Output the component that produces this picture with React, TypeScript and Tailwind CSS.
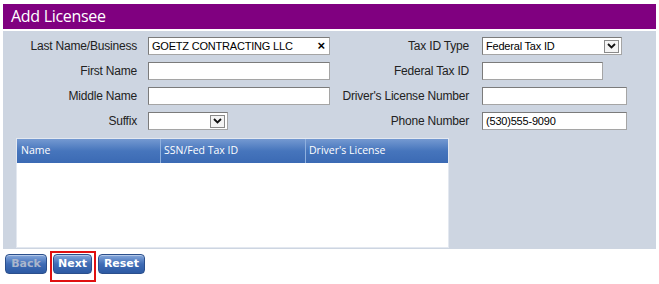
import { ReactNode } from "react";

const labelCls = "text-right text-[12px] leading-[18px] tracking-[-0.2px] text-[#222]";
const inputCls =
  "h-[18px] border border-[#a5a5a5] border-t-[#7b7b7b] border-l-[#7b7b7b] bg-white px-[3px] text-[11px] leading-[16px] tracking-[-0.2px] text-black";

const SelectBox = ({ width, value }: { width: number; value?: string }) => (
  <div
    className={`${inputCls} flex items-center justify-between pr-[2px]`}
    style={{ width }}
  >
    <span>{value}</span>
    <span className="flex h-[13px] w-[15px] items-center justify-center border border-[#8a8a8a] bg-[#f4f4f4]">
      <svg width="9" height="6" viewBox="0 0 9 6">
        <path d="M1 1 L4.5 4.5 L8 1" fill="none" stroke="#111" strokeWidth="1.8" />
      </svg>
    </span>
  </div>
);

const Row = ({
  left,
  leftField,
  right,
  rightField,
}: {
  left: string;
  leftField: ReactNode;
  right: string;
  rightField: ReactNode;
}) => (
  <div className="flex items-center">
    <div className={`${labelCls} w-[134px]`}>{left}</div>
    <div className="ml-[11px] w-[182px]">{leftField}</div>
    <div className={`${labelCls} w-[139px]`}>{right}</div>
    <div className="ml-[13px]">{rightField}</div>
  </div>
);

const Btn = ({
  children,
  disabled,
  width,
}: {
  children: string;
  disabled?: boolean;
  width: number;
}) => (
  <button
    className={`block h-[20px] rounded-[4px] border border-[#2b4f8c] bg-gradient-to-b from-[#86a8dc] via-[#3f6cb5] to-[#2d5aa3] text-[11px] font-bold leading-[18px] shadow-[inset_0_1px_0_rgba(255,255,255,0.4)] ${
      disabled ? "text-[#aab6cc]" : "text-white"
    }`}
    style={{ fontFamily: "'DejaVu Sans', sans-serif", width }}
  >
    {children}
  </button>
);

export default function App() {
  return (
    <div
      className="h-[284px] w-[659px] bg-white px-[3px] pt-[4px]"
      style={{ fontFamily: "'Liberation Sans', Arial, sans-serif" }}
    >
      <div
        className="h-[25px] bg-[#800080] pl-[8px] text-[16px] leading-[25px] tracking-[-0.3px] text-white"
        style={{ fontFamily: "'Open Sans', sans-serif" }}
      >
        Add Licensee
      </div>
      <div className="mt-[2px] h-[218px] w-[653px] bg-[#cdd5e1] pt-[6px]">
        <div className="flex flex-col gap-[7px]">
          <Row
            left="Last Name/Business"
            leftField={
              <div className={`${inputCls} flex items-center justify-between bg-[#fdf5e6]`}>
                <span>GOETZ CONTRACTING LLC</span>
                <span className="pr-[1px] text-[13px] font-bold leading-[14px]">×</span>
              </div>
            }
            right="Tax ID Type"
            rightField={<SelectBox width={140} value="Federal Tax ID" />}
          />
          <Row
            left="First Name"
            leftField={<div className={inputCls} />}
            right="Federal Tax ID"
            rightField={<div className={`${inputCls} w-[121px]`} />}
          />
          <Row
            left="Middle Name"
            leftField={<div className={inputCls} />}
            right="Driver's License Number"
            rightField={<div className={`${inputCls} w-[145px]`} />}
          />
          <Row
            left="Suffix"
            leftField={<SelectBox width={80} />}
            right="Phone Number"
            rightField={<div className={`${inputCls} w-[145px]`}>(530)555-9090</div>}
          />
        </div>
        <div className="ml-[13px] mt-[8px] h-[110px] w-[433px] border border-[#e3e8f0] bg-white">
          <div
            className="flex h-[24px] bg-gradient-to-b from-[#7499d1] via-[#4675bc] to-[#3b6ab4] text-[10.5px] leading-[22px] text-white"
            style={{ fontFamily: "'Open Sans', sans-serif" }}
          >
            <div className="w-[144px] border-r border-[#8fb0de] pl-[4px]">Name</div>
            <div className="w-[145px] border-r border-[#8fb0de] pl-[3px]">SSN/Fed Tax ID</div>
            <div className="flex-1 pl-[3px]">Driver's License</div>
          </div>
        </div>
      </div>
      <div className="mt-[5px] flex items-start gap-[6px] pl-[2px]">
        <Btn disabled width={42}>
          Back
        </Btn>
        <div className="relative">
          <Btn width={39}>Next</Btn>
          <span className="absolute -bottom-[8px] -left-[3px] -right-[4px] -top-[3px] border-2 border-[#e01010]" />
        </div>
        <Btn width={47}>Reset</Btn>
      </div>
    </div>
  );
}
